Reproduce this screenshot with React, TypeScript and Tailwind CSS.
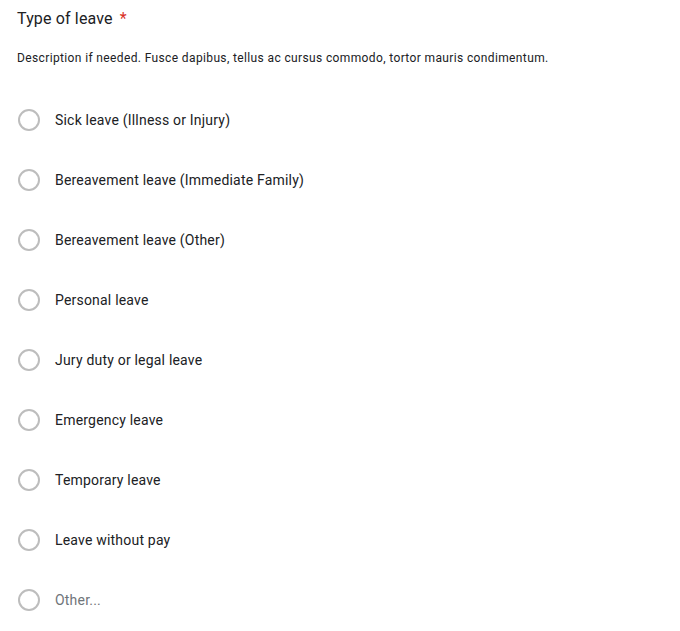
import React from 'react';

const OPTIONS = [
  'Sick leave (Illness or Injury)',
  'Bereavement leave (Immediate Family)',
  'Bereavement leave (Other)',
  'Personal leave',
  'Jury duty or legal leave',
  'Emergency leave',
  'Temporary leave',
  'Leave without pay',
];

const Radio: React.FC = () => (
  <div className="w-[22px] h-[22px] rounded-full border-2 border-[#bdbdbd] bg-white flex-shrink-0 ml-[1px]" />
);

export default function App() {
  return (
    <div className="w-[680px] h-[631px] bg-white pl-[17px] font-['Roboto',sans-serif] text-[#202124]">
      {/* Question header */}
      <div className="pt-[7px] h-[31px] text-[16px] leading-[24px] tracking-[0.15px] flex items-center">
        <span>Type of leave</span>
        <span className="text-[#d93025] ml-[7px]">*</span>
      </div>
      <div className="mt-[19px] text-[12px] leading-[16px] tracking-[0.37px]">
        Description if needed. Fusce dapibus, tellus ac cursus commodo, tortor mauris condimentum.
      </div>

      {/* Options */}
      <div className="mt-[24px] flex flex-col">
        {OPTIONS.map(label => (
          <div key={label} className="h-[60px] flex items-center">
            <Radio />
            <span className="ml-[15px] text-[14px] tracking-[0.2px]">{label}</span>
          </div>
        ))}
        <div className="h-[60px] flex items-center">
          <Radio />
          <span className="ml-[15px] text-[14px] tracking-[0.2px] text-[#70757a]">Other...</span>
        </div>
      </div>
    </div>
  );
}
